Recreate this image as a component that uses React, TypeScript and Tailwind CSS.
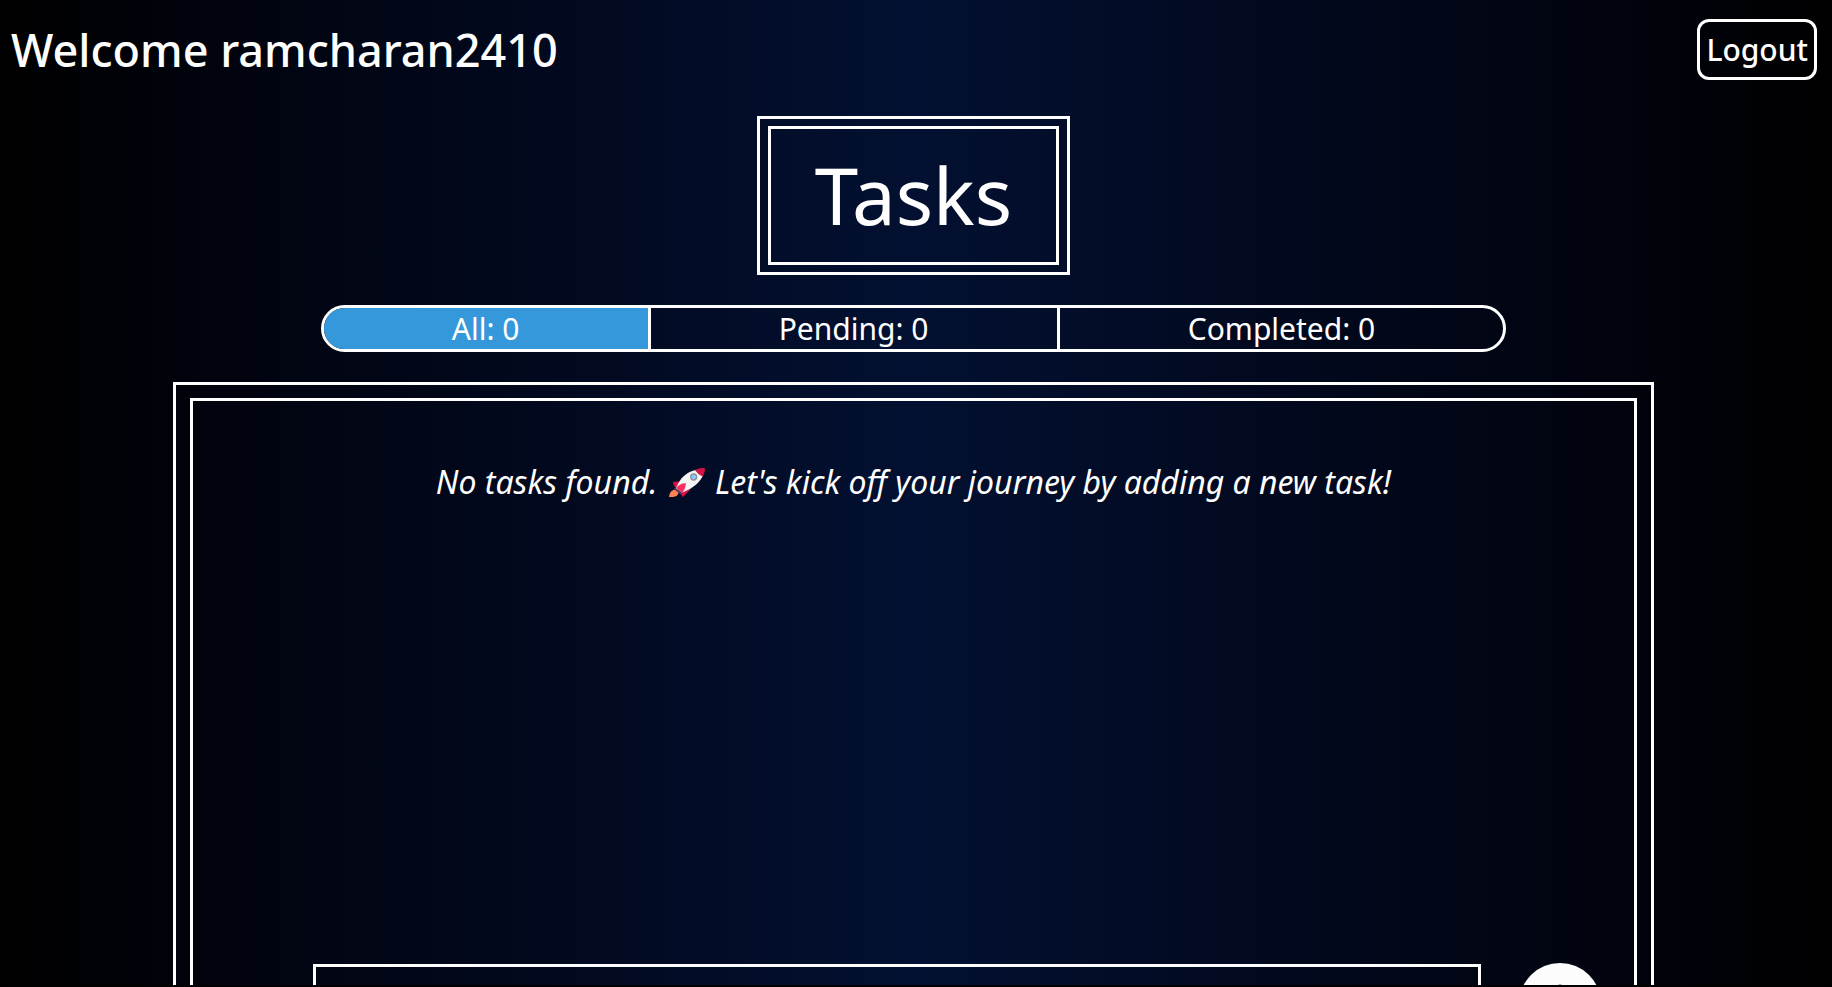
import { useState } from "react";

const filters = [
  { name: "All", count: 0 },
  { name: "Pending", count: 0 },
  { name: "Completed", count: 0 },
];

function Header() {
  return (
    <header className="flex items-start justify-between pt-[19px] pr-[10px] pl-[11px]">
      <h1 className="text-[45px] leading-[61px] font-medium">Welcome ramcharan2410</h1>
      <button type="button" className="h-[61px] rounded-xl border-3 border-white px-[6px] text-[30px] leading-[55px] font-medium">
        Logout
      </button>
    </header>
  );
}

function FilterBar() {
  const [active, setActive] = useState("All");
  return (
    <nav aria-label="Filter tasks" className="mt-[30px] flex h-[47px] w-[64.9%] overflow-hidden rounded-full border-3 border-white">
      {filters.map((f) => (
        <button
          key={f.name}
          type="button"
          aria-pressed={active === f.name}
          onClick={() => setActive(f.name)}
          className={
            "flex-auto border-r-3 border-white text-[30px] leading-[41px] last:border-r-0 " +
            (active === f.name ? "bg-[#3498db]" : "")
          }
        >
          {f.name}: {f.count}
        </button>
      ))}
    </nav>
  );
}

function Rocket() {
  return (
    <svg viewBox="0 0 108 87" role="img" aria-label="rocket" className="mr-[2px] ml-[3px] inline-block h-[29px] w-9 align-[-3px]">
      <path d="M24 64C12 64 2 70 0 87c12 1 22-1 26-7 3-5 4-10-2-16z" fill="#ff8257" />
      <path d="M34 40 12 42c0 7 4 14 9 18z" fill="#d3114b" />
      <path d="M66 56 62 67 42 87c-5-3-6-8-5-14z" fill="#d3114b" />
      <path d="M80 6C58 10 38 26 28 46l-8 16 18 12C62 66 88 50 101 25z" fill="#f4f4f4" />
      <path d="M107 0C97-1 87 1 78 6c6 9 13 16 23 19 5-8 8-17 6-25z" fill="#d3114b" />
      <path d="M19 59 41 75l-5 5-21-16z" fill="#5a3a5c" />
      <path d="M22 60c6-9 18-15 29-14-2 12-4 24-13 28z" fill="#f92f60" />
      <circle cx="74" cy="27" r="9" fill="#83cbff" stroke="#8d9096" strokeWidth="4" />
    </svg>
  );
}

function AddIcon() {
  return (
    <svg viewBox="0 0 82 82" className="size-[82px]" aria-hidden="true">
      <circle cx="41" cy="41" r="41" fill="#fcfcfc" />
      <path d="M41 24v34M24 41h34" stroke="#020617" strokeWidth="5" strokeLinecap="round" />
    </svg>
  );
}

export default function App() {
  return (
    <div className="flex h-screen flex-col overflow-hidden border-b-2 border-black bg-[linear-gradient(90deg,#000000,#01030e_12%,#031031_50%,#01030e_88%,#000000)] pr-[5px] font-['Noto_Sans',sans-serif] text-white">
      <Header />
      <main className="flex flex-col items-center pt-9">
        <div className="border-3 border-white px-2 py-[7px]">
          <h2 className="border-3 border-white px-[44px] py-[14px] text-[78px] leading-[105px]">Tasks</h2>
        </div>
        <FilterBar />
        <section className="mt-[30px] w-[81.1%] border-3 border-white px-[14px] py-[13px]">
          <div className="border-3 border-white">
            <div className="h-[562px] pt-[60px]">
              <p className="text-center text-[32px] leading-[41px] italic">
                No tasks found. <Rocket /> Let's kick off your journey by adding a new task!
              </p>
            </div>
            <form className="flex items-start gap-[38px] pr-[33px] pb-[60px] pl-[120px]" onSubmit={(e) => e.preventDefault()}>
              <input type="text" aria-label="New task" className="mt-px h-20 min-w-0 flex-1 border-3 border-white px-4 text-[30px]" />
              <button type="submit" aria-label="Add task">
                <AddIcon />
              </button>
            </form>
          </div>
        </section>
      </main>
    </div>
  );
}
